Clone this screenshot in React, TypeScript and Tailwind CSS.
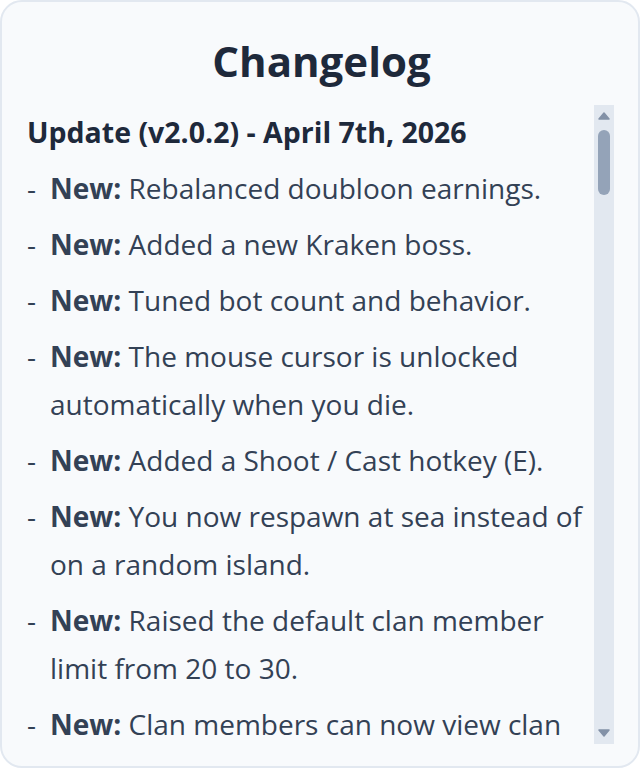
import React from 'react';

const items: { text: string }[] = [
  { text: 'Rebalanced doubloon earnings.' },
  { text: 'Added a new Kraken boss.' },
  { text: 'Tuned bot count and behavior.' },
  { text: 'The mouse cursor is unlocked automatically when you die.' },
  { text: 'Added a Shoot / Cast hotkey (E).' },
  { text: 'You now respawn at sea instead of on a random island.' },
  { text: 'Raised the default clan member limit from 20 to 30.' },
  { text: 'Clan members can now view clan chat history after joining.' },
  { text: 'Fixed ships clipping into islands.' },
];

const App: React.FC = () => {
  return (
    <div className="w-[640px] h-[768px] bg-white font-['Open_Sans',sans-serif]">
      <div className="flex flex-col h-full bg-[#f8fafc] border-2 border-[#e2e8f0] rounded-[22px] pl-[25px] pr-[24px] pt-[28px] pb-[22px]">
        <h1 className="text-center text-[42px] leading-[62px] font-bold text-[#1e293b] pl-[2px]">Changelog</h1>
        <div className="mt-[13px] flex-1 flex min-h-0">
          <div className="flex-1 overflow-hidden pr-[4px]">
            <h2 className="text-[28.5px] leading-[36px] font-bold text-[#1e293b] pt-[9px]">Update (v2.0.2) - April 7th, 2026</h2>
            <ul className="mt-[14px] flex flex-col gap-[8px] text-[28px] leading-[48px] text-[#334155]">
              {items.map((item, i) => (
                <li key={i} className="flex">
                  <span className="w-[23px] shrink-0">-</span>
                  <span>
                    <b className="font-bold">New:</b> {item.text}
                  </span>
                </li>
              ))}
            </ul>
          </div>
          {/* scrollbar */}
          <div className="w-[20px] shrink-0 bg-[#e2e8f0] flex flex-col items-center pt-[7px] pb-[7px]">
            <svg width="12" height="8" viewBox="0 0 12 8" className="shrink-0">
              <path d="M6 1 L11 7 L1 7 Z" fill="#8391a7" stroke="#8391a7" strokeLinejoin="round" strokeWidth="1.5" />
            </svg>
            <div className="mt-[10px] w-[12px] h-[65px] rounded-full bg-[#94a3b8]" />
            <div className="flex-1" />
            <svg width="12" height="8" viewBox="0 0 12 8" className="shrink-0">
              <path d="M1 1 L11 1 L6 7 Z" fill="#8391a7" stroke="#8391a7" strokeLinejoin="round" strokeWidth="1.5" />
            </svg>
          </div>
        </div>
      </div>
    </div>
  );
};

export default App;
